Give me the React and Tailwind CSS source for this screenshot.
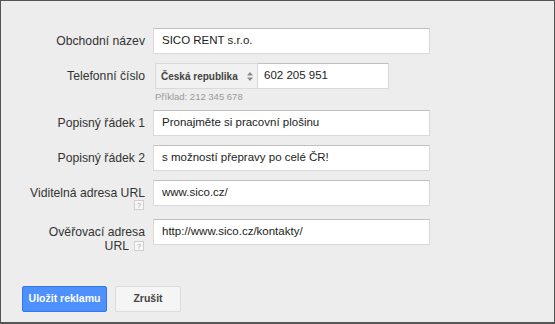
import React from 'react';

const HelpIcon = ({ className = '' }) => (
  <span className={`inline-flex h-[10px] w-[10px] items-center justify-center border border-[#cfcfcf] bg-[#f7f7f7] text-[7px] leading-none text-[#999] ${className}`}>?</span>
);

const TextField = ({ value }) => (
  <div className="flex h-[26px] w-[277px] items-center border border-[#d9d9d9] border-t-[#c0c0c0] bg-white px-[8px] text-[11.5px] text-[#222]">{value}</div>
);

const Row = ({ label, children, className = '' }) => (
  <div className={`flex items-start ${className}`}>
    <div className="ml-[24px] w-[120px] pt-[6px] text-right text-[12.2px] leading-[14px] text-[#333]">{label}</div>
    <div className="ml-[8px]">{children}</div>
  </div>
);

const App = () => {
  return (
    <div className="h-[324px] w-[555px] border-t border-l border-r border-b-2 border-[#555] bg-[#ededed] pt-[27px] font-['Liberation_Sans',Arial,sans-serif]">
      <Row label="Obchodní název">
        <TextField value="SICO RENT s.r.o." />
      </Row>

      {/* Phone with country select */}
      <Row label="Telefonní číslo" className="mt-[9px]">
        <div className="ml-[2px] flex">
          <div className="flex h-[26px] w-[103px] items-center justify-between border border-[#d9d9d9] bg-[#f1f1f1] pl-[5px] pr-[4px] text-[10px] font-bold text-[#444]">
            <span>Česká republika</span>
            <svg width="6" height="9" viewBox="0 0 6 9" className="shrink-0">
              <path d="M3 0 L6 3.5 L0 3.5 Z" fill="#888" />
              <path d="M0 5.5 L6 5.5 L3 9 Z" fill="#888" />
            </svg>
          </div>
          <div className="flex h-[26px] w-[131px] items-center border border-l-0 border-[#d9d9d9] border-t-[#c0c0c0] bg-white pl-[6px] text-[11.5px] text-[#222]">602 205 951</div>
        </div>
        <div className="ml-[2px] mt-[2px] text-[9.5px] leading-[11px] text-[#999]">Příklad: 212 345 678</div>
      </Row>

      <Row label="Popisný řádek 1" className="mt-[8px]">
        <TextField value="Pronajměte si pracovní plošinu" />
      </Row>

      <Row label="Popisný řádek 2" className="mt-[9px]">
        <TextField value="s možností přepravy po celé ČR!" />
      </Row>

      <Row
        className="mt-[9px]"
        label={
          <>
            <div>Viditelná adresa URL</div>
            <div className="flex justify-end pr-[1px]">
              <HelpIcon />
            </div>
          </>
        }
      >
        <TextField value="www.sico.cz/" />
      </Row>

      <Row
        className="mt-[9px]"
        label={
          <>
            <div>Ověřovací adresa</div>
            <div className="flex items-center justify-end pr-[1px]">
              URL
              <HelpIcon className="ml-[5px]" />
            </div>
          </>
        }
      >
        <TextField value="http://www.sico.cz/kontakty/" />
      </Row>

      {/* Buttons */}
      <div className="ml-[21px] mt-[33px] flex gap-[8px]">
        <button className="h-[26px] w-[85px] rounded-[2px] border border-[#3079ed] bg-[#4d90fe] text-[10.5px] font-bold text-white">Uložit reklamu</button>
        <button className="h-[26px] w-[66px] rounded-[2px] border border-[#dcdcdc] bg-[#f5f5f5] text-[10.5px] font-bold text-[#444]">Zrušit</button>
      </div>
    </div>
  );
};

export default App;
